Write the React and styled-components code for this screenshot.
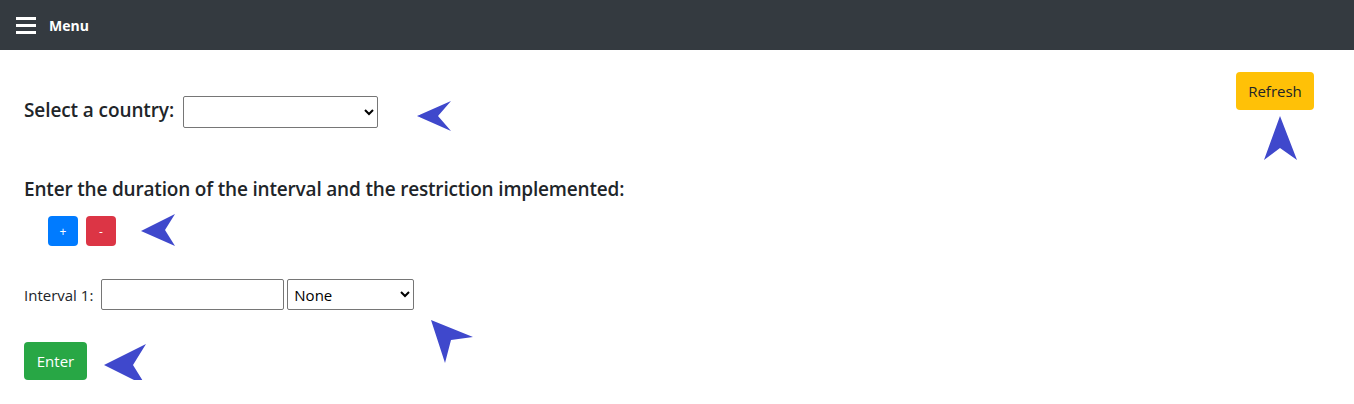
import React from "react";
import styled, { createGlobalStyle } from "styled-components";

const Global = createGlobalStyle`
  body {
    margin: 0;
    font-family: "Open Sans", "Noto Sans", sans-serif;
    color: #212529;
    background: #fff;
  }
`;

const Nav = styled.header`
  height: 50px;
  background: #343a40;
  display: flex;
  align-items: center;
  padding: 0 16px;
  gap: 13px;
  box-sizing: border-box;
`;

const Burger = styled.span`
  display: flex;
  flex-direction: column;
  gap: 4px;
  width: 20px;

  span {
    display: block;
    height: 3px;
    background: #fff;
  }
`;

const NavTitle = styled.span`
  color: #fff;
  font-weight: 700;
  font-size: 14px;
`;

const Page = styled.main`
  position: relative;
  padding: 22px 40px 0 24px;
`;

const TopRow = styled.div`
  display: flex;
  justify-content: space-between;
  align-items: flex-start;
`;

const Field = styled.div`
  display: flex;
  align-items: center;
  gap: ${({ $gap }) => $gap ?? 8}px;
  margin-top: ${({ $top }) => $top || 0}px;
`;

const Label = styled.label`
  font-size: ${({ $size }) => $size || 14}px;
  font-weight: ${({ $weight }) => $weight || 400};
  letter-spacing: ${({ $ls }) => $ls || 0}px;
  margin-top: ${({ $lift }) => -($lift || 0)}px;
  margin-right: ${({ $gap }) => $gap || 0}px;
`;

const Select = styled.select`
  width: ${({ $w }) => $w}px;
  height: ${({ $h }) => $h}px;
  border: 1px solid #767676;
  border-radius: 2px;
  background: #fff;
  font-family: inherit;
  font-size: 15px;
  color: #000;
  padding: 0 2px;
  box-sizing: border-box;
`;

const Input = styled.input`
  width: 183px;
  height: 31px;
  border: 1px solid #767676;
  border-radius: 2px;
  box-sizing: border-box;
`;

const Button = styled.button`
  background: ${({ $bg }) => $bg};
  color: ${({ $fg }) => $fg || "#fff"};
  border: none;
  border-radius: 4px;
  font-family: inherit;
  font-size: ${({ $size }) => $size || 15}px;
  height: ${({ $h }) => $h || 38}px;
  width: ${({ $w }) => $w}px;
  padding: 0;
  cursor: pointer;
`;

const Heading = styled.h5`
  margin: 48px 0 0;
  font-size: 19px;
  font-weight: 600;
  letter-spacing: -0.18px;
`;

const SmallBtns = styled.div`
  display: flex;
  gap: 8px;
  margin: 14px 0 0 24px;
`;

const Arrow = styled.svg`
  position: absolute;
  overflow: visible;
`;

const ARROW = "#3f48cc";

const Pointer = ({ x, y, w, h, points }) => (
  <Arrow style={{ left: x, top: y }} width={w} height={h} viewBox={`0 0 ${w} ${h}`}>
    <polygon points={points} fill={ARROW} />
  </Arrow>
);

export default function App() {
  return (
    <>
      <Global />
      <Nav>
        <Burger><span /><span /><span /></Burger>
        <NavTitle>Menu</NavTitle>
      </Nav>
      <Page>
        <TopRow>
          <Field $top={24} $gap={0}>
            <Label $size={19} $weight={600} $ls={-0.1} $lift={4} $gap={9}>Select a country:</Label>
            <Select $w={195} $h={32}><option></option></Select>
          </Field>
          <Button $bg="#ffc107" $fg="#212529" $w={78}>Refresh</Button>
        </TopRow>

        <Heading>Enter the duration of the interval and the restriction implemented:</Heading>

        <SmallBtns>
          <Button $bg="#007bff" $w={30} $h={30} $size={12}>+</Button>
          <Button $bg="#dc3545" $w={30} $h={30} $size={12}>-</Button>
        </SmallBtns>

        <Field $top={33} $gap={3}>
          <Label $size={15} $gap={5}>Interval 1:</Label>
          <Input />
          <Select $w={127} $h={31}><option>None</option></Select>
        </Field>

        <Field $top={32}>
          <Button $bg="#28a745" $w={63}>Enter</Button>
        </Field>

        <Pointer x={417} y={51} w={34} h={30} points="0,15 34,0 21,15 34,30" />
        <Pointer x={1264} y={66} w={33} h={44} points="16,0 33,44 16,32 0,44" />
        <Pointer x={141} y={164} w={34} h={32} points="0,17 34,0 24,16 34,32" />
        <Pointer x={431} y={270} w={42} h={43} points="0,0 42,17 20,20 14,43" />
        <Pointer x={104} y={294} w={43} h={42} points="0,21 42,0 29,21 42,42" />
      </Page>
    </>
  );
}
